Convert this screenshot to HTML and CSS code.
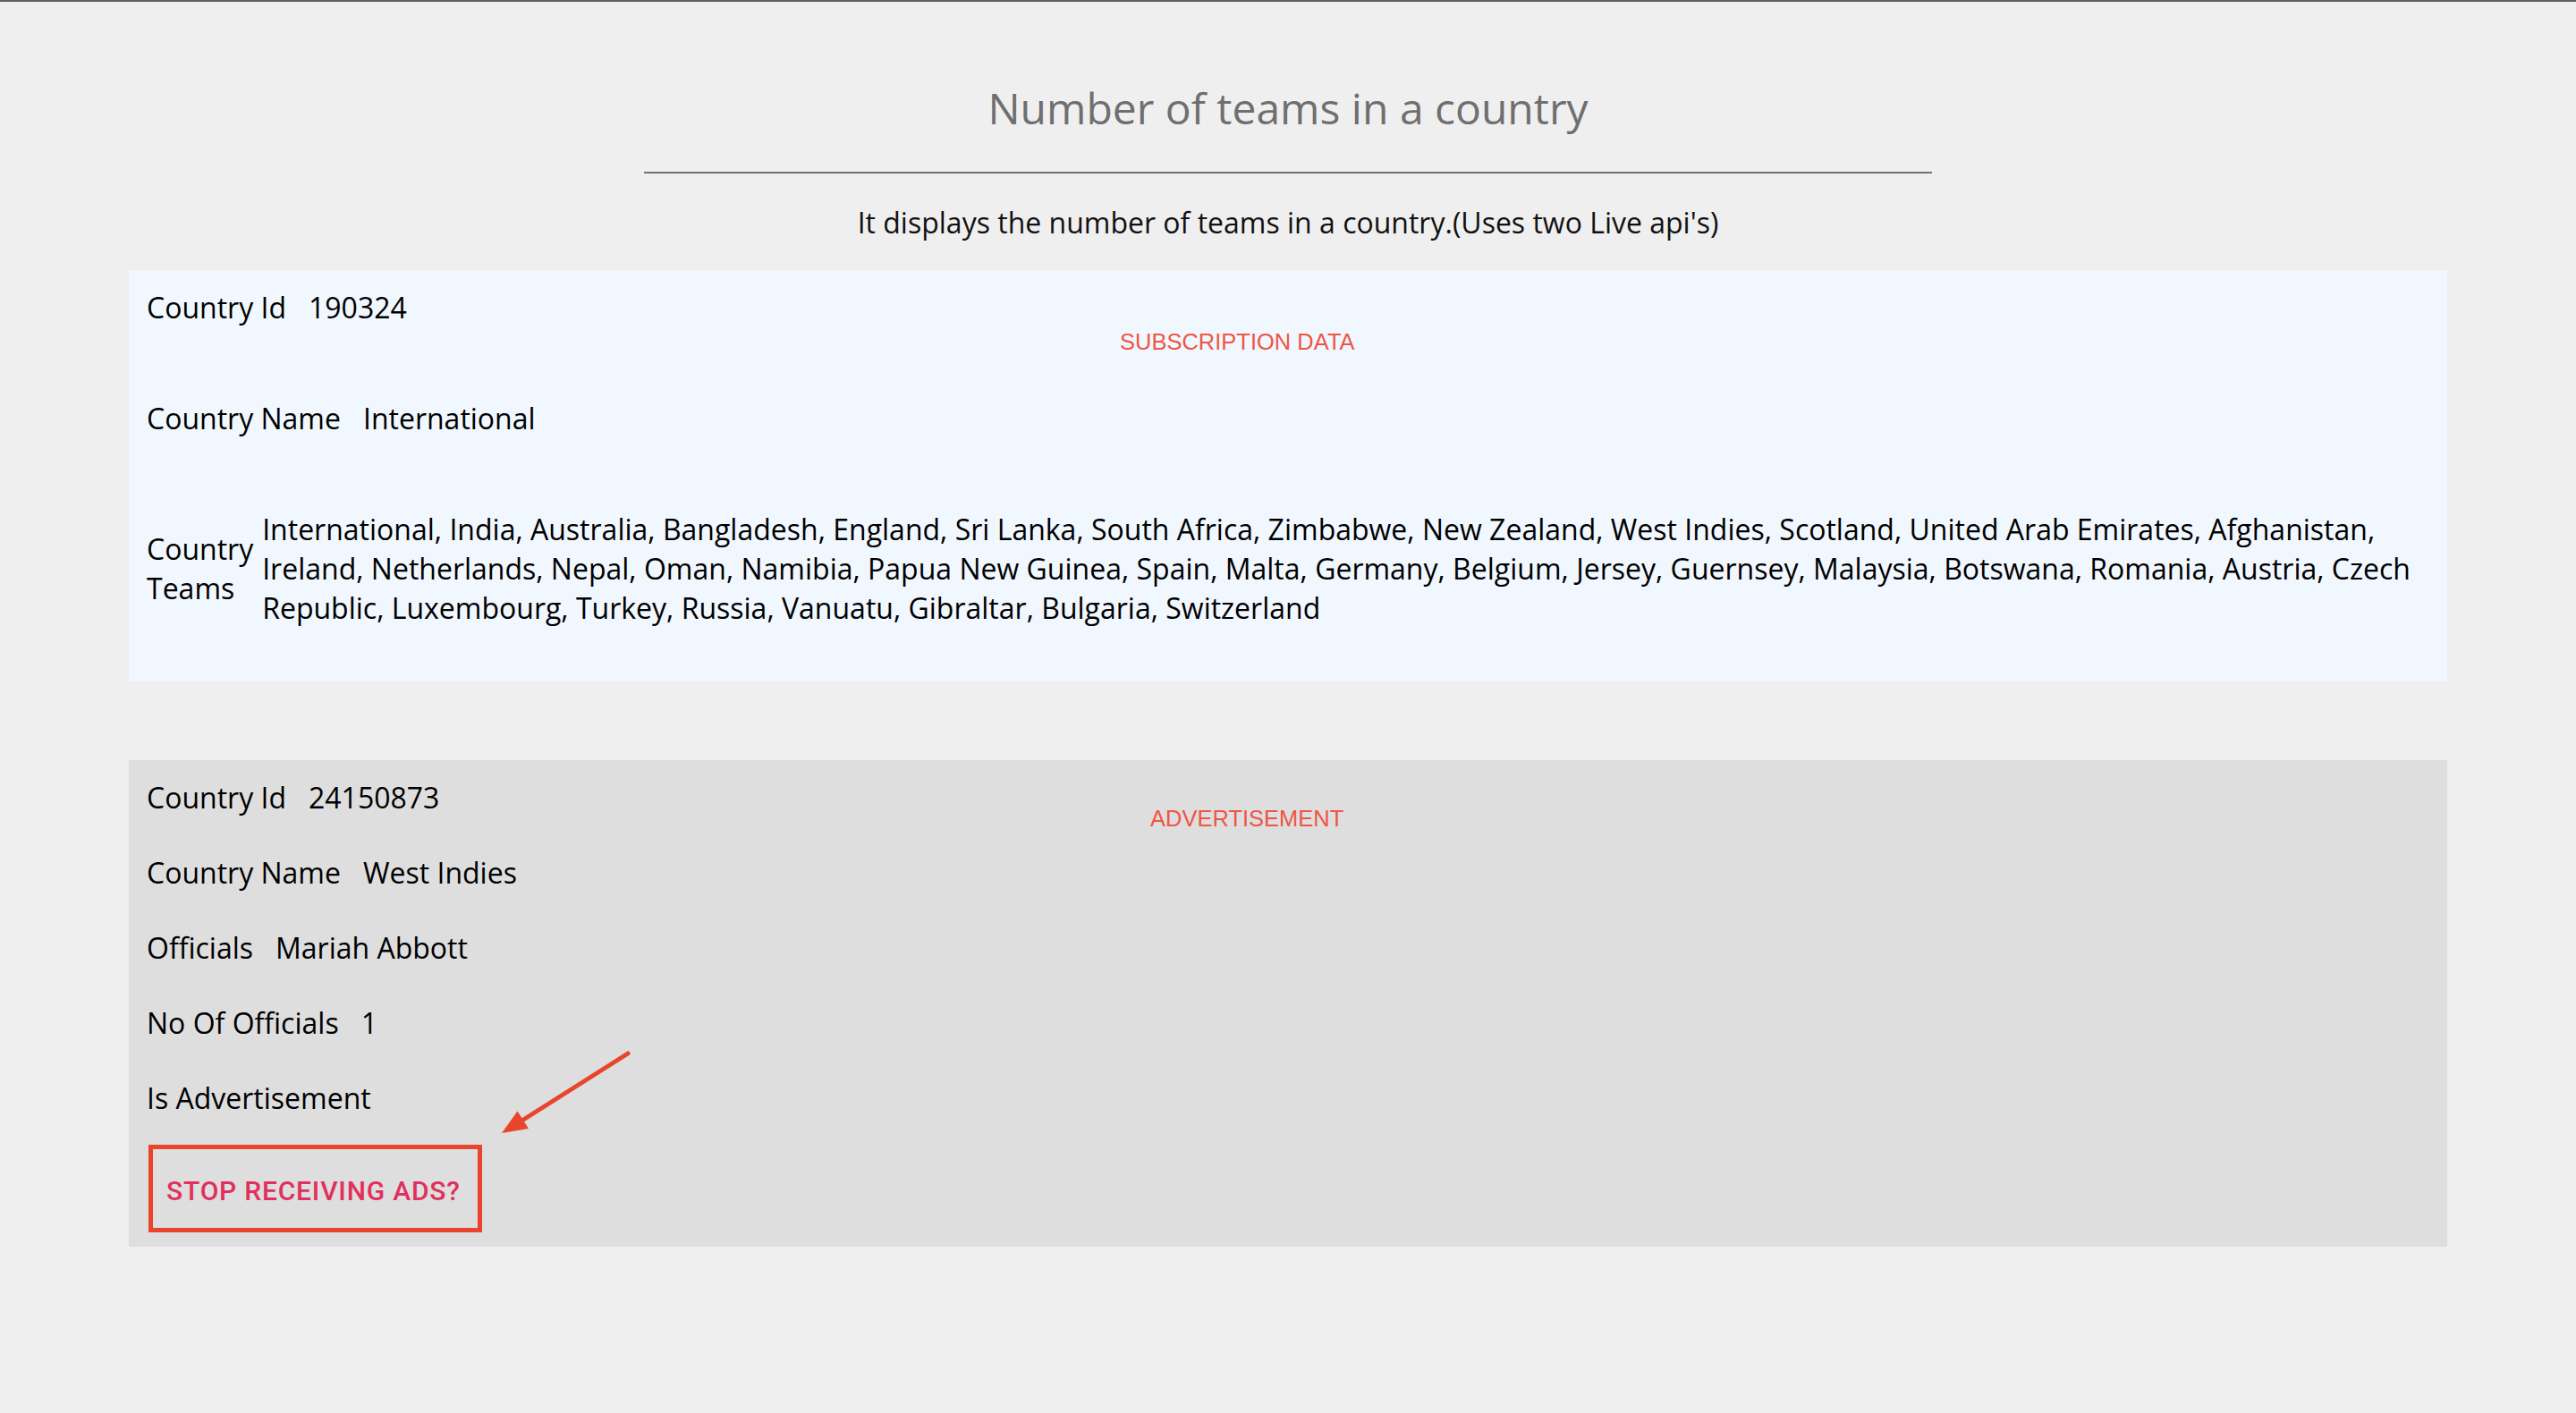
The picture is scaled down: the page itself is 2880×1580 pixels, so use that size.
FILE: index.html
```html
<!DOCTYPE html>
<html lang="en">
<head>
<meta charset="utf-8">
<title>Number of teams in a country</title>
<link rel="stylesheet" href="styles.css">
</head>
<body>
<div class="topbar"></div>
<header class="header">
  <h1 class="title">Number of teams in a country</h1>
  <hr class="divider">
  <p class="subtitle">It displays the number of teams in a country.(Uses two Live api's)</p>
</header>
<main class="cards">
  <section class="card card-sub">
    <span class="badge badge-sub">SUBSCRIPTION DATA</span>
    <div class="row"><span class="label">Country Id</span><span class="value">190324</span></div>
    <div class="row"><span class="label">Country Name</span><span class="value">International</span></div>
    <div class="row row-teams"><span class="label">Country Teams</span><span class="value">International, India, Australia, Bangladesh, England, Sri Lanka, South Africa, Zimbabwe, New Zealand, West Indies, Scotland, United Arab Emirates, Afghanistan, Ireland, Netherlands, Nepal, Oman, Namibia, Papua New Guinea, Spain, Malta, Germany, Belgium, Jersey, Guernsey, Malaysia, Botswana, Romania, Austria, Czech Republic, Luxembourg, Turkey, Russia, Vanuatu, Gibraltar, Bulgaria, Switzerland</span></div>
  </section>
  <section class="card card-ad">
    <span class="badge badge-ad">ADVERTISEMENT</span>
    <div class="row"><span class="label">Country Id</span><span class="value">24150873</span></div>
    <div class="row"><span class="label">Country Name</span><span class="value">West Indies</span></div>
    <div class="row"><span class="label">Officials</span><span class="value">Mariah Abbott</span></div>
    <div class="row"><span class="label">No Of Officials</span><span class="value">1</span></div>
    <div class="row"><span class="label">Is Advertisement</span><span class="value"></span></div>
    <button class="stop-btn" type="button">Stop receiving ads?</button>
    <svg class="arrow" width="170" height="110" viewBox="0 0 170 110" aria-hidden="true">
      <line x1="158" y1="8" x2="38" y2="84" stroke="#e8452c" stroke-width="5" stroke-linecap="round"/>
      <polygon points="17,97 34.5,72.5 47,92" fill="#e8452c"/>
    </svg>
  </section>
</main>
</body>
</html>
```
FILE: styles.css
```css
html, body {
  margin: 0;
  padding: 0;
}
body {
  background: #efefef;
  font-family: "Open Sans", "Noto Sans", sans-serif;
  color: #000;
  min-height: 1580px;
}
.topbar {
  height: 2px;
  background: #5f5f60;
}
.header {
  display: flex;
  flex-direction: column;
  align-items: center;
}
.title {
  margin: 86px 0 0;
  font-size: 48px;
  line-height: 66px;
  font-weight: 400;
  color: #6f6f6f;
}
.divider {
  width: 50%;
  margin: 38px 0 0;
  border: 0;
  border-top: 2px solid #707070;
  height: 0;
}
.subtitle {
  margin: 33px 0 0;
  font-size: 32px;
  line-height: 44px;
  color: #111;
}
.cards {
  display: flex;
  flex-direction: column;
  gap: 88px;
  margin: 31px 5% 0;
}
.card {
  position: relative;
  display: flex;
  flex-direction: column;
  padding: 20px 20px;
}
.card-sub {
  background: #f1f7fe;
  gap: 80px;
  padding-bottom: 60px;
}
.card-ad {
  background: #dedede;
  gap: 40px;
  padding-bottom: 16px;
}
.row {
  display: flex;
  align-items: center;
  gap: 25px;
  font-size: 32px;
  line-height: 44px;
}
.row-teams {
  gap: 10px;
}
.badge {
  position: absolute;
  font-family: "Liberation Sans", Arial, sans-serif;
  font-size: 25.5px;
  line-height: 30px;
  color: #ef5545;
  white-space: nowrap;
}
.badge-sub {
  left: 1108px;
  top: 65px;
}
.badge-ad {
  left: 1142px;
  top: 50px;
}
.stop-btn {
  align-self: flex-start;
  box-sizing: border-box;
  width: 373px;
  height: 98px;
  margin: -10px 0 0 2px;
  padding: 6px 0 0 15px;
  border: 5px solid #e8452c;
  background: transparent;
  font-family: Roboto, "Liberation Sans", sans-serif;
  font-weight: 500;
  font-size: 30px;
  line-height: 36px;
  letter-spacing: 0.8px;
  text-transform: uppercase;
  text-align: left;
  color: #e1305c;
}
.arrow {
  position: absolute;
  left: 400px;
  top: 320px;
}
```
